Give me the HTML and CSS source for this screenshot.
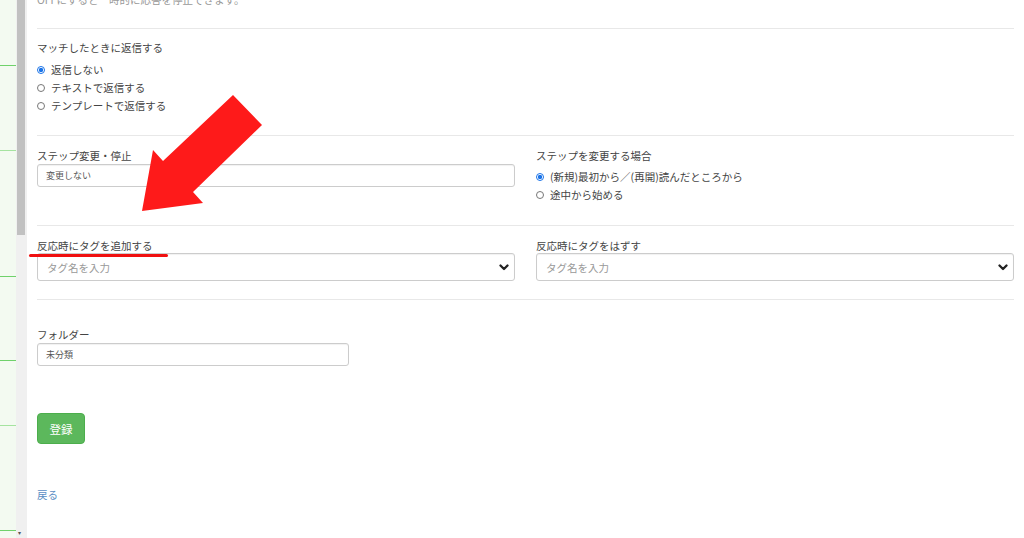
FILE: index.html
```html
<!DOCTYPE html>
<html lang="ja">
<head>
<meta charset="utf-8">
<link rel="stylesheet" href="styles.css">
</head>
<body>
<div class="page">
  <aside class="sidebar">
    <div class="line l1"></div>
    <div class="line l2 light"></div>
    <div class="line l3"></div>
    <div class="line l4"></div>
    <div class="line l5 light"></div>
    <div class="line l6"></div>
  </aside>
  <div class="scrollbar">
    <div class="thumb"></div>
    <div class="down">&#9662;</div>
  </div>
  <main class="main">
    <p class="note">OFFにすると一時的に応答を停止できます。</p>
    <hr class="rule r1">
    <section class="sec s1">
      <div class="label">マッチしたときに返信する</div>
      <div class="radios">
        <div class="radio on"><span class="dot"></span>返信しない</div>
        <div class="radio"><span class="dot"></span>テキストで返信する</div>
        <div class="radio"><span class="dot"></span>テンプレートで返信する</div>
      </div>
    </section>
    <hr class="rule r2">
    <section class="sec grid s2">
      <div class="col">
        <div class="label">ステップ変更・停止</div>
        <div class="input small">変更しない</div>
      </div>
      <div class="col">
        <div class="label">ステップを変更する場合</div>
        <div class="radios r-right">
          <div class="radio on"><span class="dot"></span>(新規)最初から／(再開)読んだところから</div>
          <div class="radio"><span class="dot"></span>途中から始める</div>
        </div>
      </div>
    </section>
    <hr class="rule r3">
    <section class="sec grid s3">
      <div class="col">
        <div class="label">反応時にタグを追加する</div>
        <div class="select"><span class="ph">タグ名を入力</span>
          <svg class="chev" width="10" height="7" viewBox="0 0 10 7"><path d="M1.5 1.5 L5 5 L8.5 1.5" fill="none" stroke="#222" stroke-width="2.3" stroke-linecap="round" stroke-linejoin="round"/></svg>
        </div>
      </div>
      <div class="col">
        <div class="label">反応時にタグをはずす</div>
        <div class="select"><span class="ph">タグ名を入力</span>
          <svg class="chev" width="10" height="7" viewBox="0 0 10 7"><path d="M1.5 1.5 L5 5 L8.5 1.5" fill="none" stroke="#222" stroke-width="2.3" stroke-linecap="round" stroke-linejoin="round"/></svg>
        </div>
      </div>
    </section>
    <hr class="rule r4">
    <section class="sec s4">
      <div class="label folder-label">フォルダー</div>
      <div class="input small folder">未分類</div>
    </section>
    <button class="btn">登録</button>
    <a class="back" href="#">戻る</a>
  </main>
</div>
<div class="underline"></div>
<svg class="arrow" width="1024" height="538" viewBox="0 0 1024 538">
  <polygon points="142,211 153,150 163,161 233,95 262,125 193,192 203,203" fill="#fe1a1a"/>
</svg>
</body>
</html>
```
FILE: styles.css
```css
* { box-sizing: border-box; }
html, body { margin: 0; padding: 0; }
body {
  width: 1024px;
  height: 538px;
  overflow: hidden;
  background: #fff;
  font-family: "Noto Sans CJK JP", "Noto Sans", sans-serif;
  color: #444;
  font-size: 10.5px;
  position: relative;
}
.page { display: flex; height: 538px; }
.sidebar {
  width: 16px;
  flex: none;
  background: #f3faf1;
  position: relative;
}
.line { position: absolute; left: 0; width: 16px; height: 1px; background: #6fd16b; }
.line.light { background: #a5e3a0; }
.l1 { top: 65px; }
.l2 { top: 150px; }
.l3 { top: 276px; }
.l4 { top: 360px; }
.l5 { top: 425px; }
.l6 { top: 530px; }
.scrollbar {
  width: 11px;
  flex: none;
  background: #f0f0f0;
  position: relative;
}
.thumb { margin-left: 1px; width: 8px; height: 235px; background: #c1c1c1; }
.down { position: absolute; bottom: 1px; left: 2px; font-size: 6px; color: #555; line-height: 8px; }
.main {
  width: 977px;
  margin-left: 10px;
  flex: none;
}
.note { margin: -8px 0 0; line-height: 15px; color: #999; }
.rule { border: 0; height: 1px; background: #e8e8e8; margin: 0; }
.r1 { margin-top: 21px; }
.label { line-height: 16px; color: #444; }
.s1 { padding-top: 11px; }
.radios { margin-top: 5px; }
.radio { display: flex; align-items: center; height: 18px; line-height: 18px; color: #444; }
.dot {
  width: 8px; height: 8px; border-radius: 50%;
  border: 1px solid #777; margin-right: 6px; flex: none; background: #fff;
}
.radio.on .dot { border-color: #1a73e8; background: radial-gradient(circle, #1a73e8 0 2px, #fff 2.3px); }
.r2 { margin-top: 20px; }
.grid { display: grid; grid-template-columns: 478px 478px; column-gap: 21px; }
.s2 { padding-top: 12px; }
.input {
  border: 1px solid #ccc;
  border-radius: 3px;
  box-shadow: inset 0 1px 1px rgba(0,0,0,0.06);
  height: 23px;
  line-height: 21px;
  padding: 0 8px;
  color: #555;
}
.input.small { font-size: 9px; }
.r-right { margin-top: 4px; }
.r3 { margin-top: 21px; }
.s3 { padding-top: 12px; }
.s3 .label { margin-bottom: -1px; }
.select {
  border: 1px solid #ccc;
  border-radius: 3px;
  height: 28px;
  display: flex;
  align-items: center;
  justify-content: space-between;
  padding: 0 5px 0 9px;
  box-shadow: inset 0 1px 1px rgba(0,0,0,0.06);
}
.ph { color: #999; font-size: 10.5px; }
.chev { margin-top: 1px; }
.r4 { margin-top: 18px; }
.s4 { padding-top: 26px; }
.folder-label { line-height: 17px; }
.folder { width: 312px; margin-top: 0; }
.btn {
  display: block;
  margin-top: 47px;
  width: 48px;
  height: 31px;
  background: #5cb85c;
  border: 1px solid #4cae4c;
  border-radius: 4px;
  color: #fff;
  font-family: inherit;
  font-size: 11.5px;
  padding: 0;
}
.back {
  display: block;
  margin-top: 43px;
  line-height: 16px;
  color: #5b8ec4;
  text-decoration: none;
  width: max-content;
}
.underline {
  position: absolute;
  left: 29px;
  top: 254px;
  width: 139px;
  height: 3px;
  border-radius: 2px;
  background: #f01010;
}
.arrow { position: absolute; left: 0; top: 0; pointer-events: none; }
```
